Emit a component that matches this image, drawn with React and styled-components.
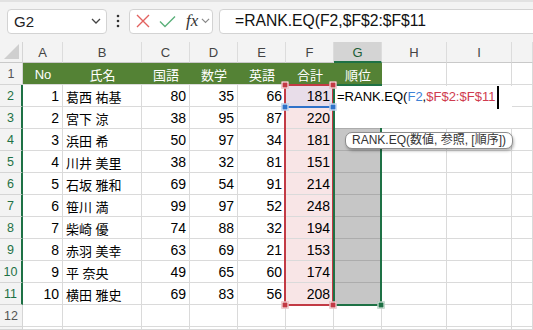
import React from 'react';
import styled, { createGlobalStyle } from 'styled-components';

const GlobalStyle = createGlobalStyle`
  body {
    margin: 0;
    background: #ffffff;
    overflow: hidden;
    font-family: "Liberation Sans", "Noto Sans CJK JP", sans-serif;
  }
`;

const FormulaBar = styled.div`
  display: flex;
  align-items: center;
  height: 42px;
  padding-left: 7px;
  background: #f3f3f3;
  box-shadow: inset 0 2px 0 #e2e2e2;
  box-sizing: border-box;
  overflow: hidden;
`;

const Box = styled.div`
  box-sizing: border-box;
  height: 25px;
  background: #ffffff;
  border: 1px solid #d3d3d3;
  border-radius: 4px;
  display: flex;
  align-items: center;
`;

const NameBox = styled(Box)`
  width: 100px;
  padding: 0 5px 0 6px;
  justify-content: space-between;
  font-size: 15px;
  color: #222;
`;

const Dots = styled.div`
  width: 22px;
  display: flex;
  justify-content: center;
`;

const FxBox = styled(Box)`
  width: 84px;
  padding-left: 6px;
  gap: 9px;
`;

const Fx = styled.span`
  font-family: "Liberation Serif", serif;
  font-style: italic;
  font-size: 17px;
  color: #333;
  margin-left: 1px;
  margin-right: -6px;
`;

const FormulaInput = styled(Box)`
  flex: 1;
  margin-left: 6px;
  margin-right: -10px;
  padding-left: 15px;
  font-size: 15.7px;
  color: #111;
`;

const Sheet = styled.div`
  position: relative;
  display: grid;
  grid-template-columns: 23px 40px 79px 48px 48px 48px 48px 48px 65px 65px 21px;
  grid-template-rows: 21px repeat(12, 22px) 3px;
  overflow: hidden;
`;

const Corner = styled.div`
  box-sizing: border-box;
  background: #f3f3f3;
  border-right: 1px solid #d5d5d5;
  border-bottom: 1px solid #c9c9c9;
  display: flex;
  align-items: flex-end;
  justify-content: flex-end;
  padding: 0 3px 3px 0;
`;

const ColHead = styled.div`
  box-sizing: border-box;
  background: ${p => (p.$active ? '#d4d4d4' : '#f3f3f3')};
  border-right: 1px solid #dcdcdc;
  border-bottom: ${p => (p.$active ? '2px solid #1e7145' : '1px solid #c9c9c9')};
  color: ${p => (p.$active ? '#1c5e36' : '#444')};
  font-size: 13px;
  display: flex;
  align-items: center;
  justify-content: center;
  padding-top: 1px;
`;

const RowHead = styled.div`
  box-sizing: border-box;
  background: #f3f3f3;
  border-bottom: 1px solid #d5d5d5;
  border-right: ${p => (p.$sel ? '2px solid #1e7145' : '1px solid #d5d5d5')};
  color: ${p => (p.$sel ? '#1e7145' : '#555')};
  font-size: 12.5px;
  display: flex;
  align-items: center;
  justify-content: center;
`;

const Cell = styled.div`
  box-sizing: border-box;
  background: ${p => p.$bg || '#ffffff'};
  border-right: 1px solid ${p => p.$line || '#dadada'};
  border-bottom: 1px solid ${p => p.$line || '#dadada'};
  color: #000;
  font-size: ${p => (p.$cjk ? '13px' : '14px')};
  display: flex;
  align-items: center;
  justify-content: ${p => (p.$right ? 'flex-end' : 'flex-start')};
  padding: 1px 3px 0 3px;
  white-space: nowrap;
  overflow: hidden;
`;

const HeadCell = styled.div`
  box-sizing: border-box;
  background: #548235;
  border-bottom: 1px solid #dadada;
  color: #ffffff;
  font-size: 13px;
  display: flex;
  align-items: center;
  justify-content: center;
  padding-top: 1px;
`;

const RangeBox = styled.div`
  position: absolute;
  box-sizing: border-box;
  border: 2px solid ${p => p.$color};
  pointer-events: none;
`;

const Handle = styled.div`
  position: absolute;
  width: 5px;
  height: 5px;
  background: ${p => p.$color};
  border: 1px solid #ffffff;
  transform: translate(-50%, -50%);
`;

const EditBox = styled.div`
  position: absolute;
  left: 335px;
  top: 44px;
  width: 177px;
  height: 42px;
  background: #ffffff;
  font-size: 13px;
  padding-left: 2px;
  box-sizing: border-box;
  display: flex;
  align-items: flex-start;
  line-height: 22px;
  white-space: nowrap;
`;

const Ref = styled.span`
  color: ${p => p.$color};
`;

const Caret = styled.span`
  display: inline-block;
  width: 2px;
  height: 23px;
  background: #000;
  margin-left: 2px;
`;

const Tip = styled.div`
  position: absolute;
  left: 345px;
  top: 90px;
  height: 17px;
  box-sizing: border-box;
  padding: 0 6px;
  background: #ffffff;
  border: 1px solid #8d8d8d;
  border-radius: 7px;
  box-shadow: 1px 2px 3px rgba(0, 0, 0, 0.28);
  font-size: 12px;
  line-height: 15px;
  color: #333;
  white-space: nowrap;
`;

const cols = ['A', 'B', 'C', 'D', 'E', 'F', 'G', 'H', 'I', ''];
const heads = ['No', '氏名', '国語', '数学', '英語', '合計', '順位'];
const data = [
  [1, '葛西 祐基', 80, 35, 66, 181],
  [2, '宮下 涼', 38, 95, 87, 220],
  [3, '浜田 希', 50, 97, 34, 181],
  [4, '川井 美里', 38, 32, 81, 151],
  [5, '石坂 雅和', 69, 54, 91, 214],
  [6, '笹川 満', 99, 97, 52, 248],
  [7, '柴崎 優', 74, 88, 32, 194],
  [8, '赤羽 美幸', 63, 69, 21, 153],
  [9, '平 奈央', 49, 65, 60, 174],
  [10, '横田 雅史', 69, 83, 56, 208],
];

const Chevron = ({ color, size = 10 }) => (
  <svg width={size} height={size * 0.6} viewBox="0 0 10 6">
    <path d="M1 1 L5 5 L9 1" fill="none" stroke={color} strokeWidth="1.3" />
  </svg>
);

export default function App() {
  const rows = [];
  // row 1: table header
  rows.push(<RowHead key="r1">1</RowHead>);
  heads.forEach((h, i) => rows.push(<HeadCell key={'h' + i}>{h}</HeadCell>));
  for (let i = 0; i < 3; i++) rows.push(<Cell key={'h1e' + i} />);

  data.forEach((d, r) => {
    rows.push(<RowHead key={'rh' + r} $sel>{r + 2}</RowHead>);
    rows.push(<Cell key={'a' + r} $right>{d[0]}</Cell>);
    rows.push(<Cell key={'b' + r} $cjk>{d[1]}</Cell>);
    rows.push(<Cell key={'c' + r} $right>{d[2]}</Cell>);
    rows.push(<Cell key={'d' + r} $right>{d[3]}</Cell>);
    rows.push(<Cell key={'e' + r} $right>{d[4]}</Cell>);
    rows.push(<Cell key={'f' + r} $right $bg={r === 0 ? '#e8dde9' : '#f8e5e6'}>{d[5]}</Cell>);
    rows.push(<Cell key={'g' + r} $bg={r === 0 ? '#fff' : '#c6c6c6'} $line={r === 0 ? '#dadada' : '#acacac'} />);
    for (let i = 0; i < 3; i++) rows.push(<Cell key={'x' + r + i} />);
  });

  [12, 13].forEach(n => {
    rows.push(<RowHead key={'rh' + n}>{n === 12 ? n : ''}</RowHead>);
    for (let i = 0; i < 10; i++) rows.push(<Cell key={'e' + n + i} />);
  });

  return (
    <>
      <GlobalStyle />
      <FormulaBar>
        <NameBox>
          <span>G2</span>
          <Chevron color="#444" />
        </NameBox>
        <Dots>
          <svg width="4" height="14" viewBox="0 0 4 14">
            <circle cx="2" cy="2" r="1.3" fill="#333" />
            <circle cx="2" cy="7" r="1.3" fill="#333" />
            <circle cx="2" cy="12" r="1.3" fill="#333" />
          </svg>
        </Dots>
        <FxBox>
          <svg width="14" height="14" viewBox="0 0 14 14">
            <path d="M1 1 L13 13 M13 1 L1 13" stroke="#e2625f" strokeWidth="1.4" />
          </svg>
          <svg width="17" height="13" viewBox="0 0 17 13">
            <path d="M1 6.5 L6 11.5 L16 1.5" fill="none" stroke="#5bb07a" strokeWidth="1.4" />
          </svg>
          <Fx>fx</Fx>
          <Chevron color="#888" size={9} />
        </FxBox>
        <FormulaInput>=RANK.EQ(F2,$F$2:$F$11</FormulaInput>
      </FormulaBar>

      <Sheet>
        <Corner>
          <svg width="15" height="15" viewBox="0 0 15 15">
            <path d="M15 0 L15 15 L0 15 Z" fill="#cfcfcf" />
          </svg>
        </Corner>
        {cols.map((c, i) => (
          <ColHead key={'c' + i} $active={c === 'G'}>{c}</ColHead>
        ))}
        {rows}

        <RangeBox $color="#2f72c9" style={{ left: 284, top: 42, width: 50, height: 24 }} />
        <RangeBox $color="#c23a45" style={{ left: 284, top: 42, width: 50, height: 222 }} />
        <RangeBox $color="#1e7145" style={{ left: 333, top: 42, width: 49, height: 222 }} />

        <EditBox>
          <span>=RANK.EQ(</span>
          <Ref $color="#3d82d6">F2</Ref>
          <span>,</span>
          <Ref $color="#cf3c4f">$F$2:$F$11</Ref>
          <Caret />
        </EditBox>
        <Tip>RANK.EQ(数値, 参照, [順序])</Tip>

        <Handle $color="#c23a45" style={{ left: 285, top: 43 }} />
        <Handle $color="#c23a45" style={{ left: 333, top: 43 }} />
        <Handle $color="#2f72c9" style={{ left: 285, top: 65 }} />
        <Handle $color="#2f72c9" style={{ left: 333, top: 65 }} />
        <Handle $color="#c23a45" style={{ left: 285, top: 263 }} />
        <Handle $color="#c23a45" style={{ left: 333, top: 263 }} />
        <Handle $color="#1e7145" style={{ left: 381, top: 263 }} />
      </Sheet>
    </>
  );
}
